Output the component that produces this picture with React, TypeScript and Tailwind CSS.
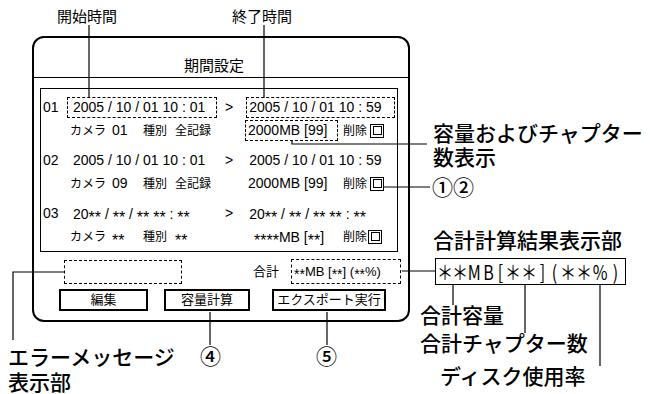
import React from "react";

const JP = "font-['Liberation_Sans','Noto_Sans_CJK_JP',sans-serif]";

function Stars({ n = 2, small }: { n?: number; small?: boolean }) {
  return (
    <span className={small ? "relative top-[3px] text-[14px]" : "relative top-[4px] text-[16px]"}>
      {"*".repeat(n)}
    </span>
  );
}

function CheckBox() {
  return (
    <div className="w-[14px] h-[14px] border-[1.5px] border-black p-[1.5px]">
      <div className="w-full h-full border border-black" />
    </div>
  );
}

function Row({
  no,
  start,
  end,
  cam,
  size,
  marked,
  last,
}: {
  no: string;
  start: React.ReactNode;
  end: React.ReactNode;
  cam: React.ReactNode;
  size: React.ReactNode;
  marked?: boolean;
  last?: boolean;
}) {
  const box = marked ? "border-dashed border-black" : "border-transparent";
  return (
    <div className="flex flex-col">
      <div className="flex items-center h-[23px] text-[14px]">
        <span className="w-[26px] pl-[2px]">{no}</span>
        <div className={`w-[150px] h-[21px] flex items-center pl-[5px] border whitespace-nowrap ${box}`}>{start}</div>
        <span className="ml-[8px]">&gt;</span>
        <div className={`ml-[13px] w-[149px] h-[21px] flex items-center pl-[2px] border whitespace-nowrap ${box}`}>{end}</div>
      </div>
      <div className="flex items-center h-[23px] pl-[29px] text-[14px]">
        <span className="w-[42px] text-[12px]">カメラ</span>
        <span className="w-[31px]">{cam}</span>
        <span className="w-[32px] text-[12px]">種別</span>
        <span className="w-[70px] text-[12px]">{last ? <Stars /> : "全記録"}</span>
        <div className={`w-[93px] h-[21px] flex items-center border whitespace-nowrap ${last ? "pl-[8px]" : "pl-[2px]"} ${box}`}>
          {size}
        </div>
        <span className="ml-[5px] text-[12px]">削除</span>
        <div className={last ? "ml-[1px]" : "ml-[3px]"}>
          <CheckBox />
        </div>
      </div>
    </div>
  );
}

const sumChars: [string, string][] = [
  ["＊", "w-[15px]"],
  ["＊", "w-[15px]"],
  ["M", "w-[15px]"],
  ["B", "w-[13px]"],
  ["[", "w-[10px]"],
  ["＊", "w-[16px]"],
  ["＊", "w-[16px]"],
  ["]", "w-[11px]"],
  ["(", "w-[12px]"],
  ["＊", "w-[16px]"],
  ["＊", "w-[16px]"],
  ["%", "w-[17px]"],
  [")", "w-[13px]"],
];

export default function App() {
  const stamp = (
    <span>
      20<Stars /> / <Stars /> / <Stars /> <Stars /> : <Stars />
    </span>
  );
  return (
    <div className={`relative w-[650px] h-[394px] bg-white text-black overflow-hidden ${JP}`}>
      <div className="pt-[36px] pl-[32px]">
        <div className="w-[378px] h-[286px] border-2 border-black rounded-[12px] flex flex-col">
          <div className="h-[40px] border-b-[1.5px] border-black pt-[19px] pr-[14px] text-center text-[15px] leading-[18px]">
            期間設定
          </div>

          <div className="mt-[10px] ml-[6px] w-[358px] border border-black pt-[7px] pb-[3px] flex flex-col gap-[7px]">
            <Row
              no="01"
              marked
              start="2005 / 10 / 01 10 : 01"
              end="2005 / 10 / 01 10 : 59"
              cam="01"
              size="2000MB [99]"
            />
            <Row
              no="02"
              start="2005 / 10 / 01 10 : 01"
              end="2005 / 10 / 01 10 : 59"
              cam="09"
              size="2000MB [99]"
            />
            <Row
              no="03"
              last
              start={stamp}
              end={stamp}
              cam={<Stars />}
              size={
                <span>
                  <Stars n={4} />MB [<Stars />]
                </span>
              }
            />
          </div>

          <div className="mt-[7px] flex items-center h-[25px]">
            <div className="ml-[30px] w-[118px] h-[24px] border border-dashed border-black" />
            <span className="ml-[71px] text-[13px]">合計</span>
            <div className="ml-[12px] w-[110px] h-[25px] border border-dashed border-black flex items-center pl-[2px] text-[13px] whitespace-nowrap">
              <span>
                <Stars small />MB [<Stars small />] (<Stars small />%)
              </span>
            </div>
          </div>

          <div className="mt-[5px] flex items-center text-[13px] whitespace-nowrap">
            <div className="ml-[25px] w-[89px] h-[22px] border-2 border-black flex items-center justify-center">編集</div>
            <div className="ml-[16px] w-[86px] h-[22px] border-2 border-black flex items-center justify-center">容量計算</div>
            <div className="ml-[22px] w-[114px] h-[22px] border-2 border-black flex items-center justify-center">
              エクスポート実行
            </div>
          </div>
        </div>
      </div>

      <svg className="absolute left-0 top-0 pointer-events-none" width="650" height="394" fill="none" stroke="black" strokeWidth="1.2">
        <path d="M89 25V98" />
        <path d="M264 25V98" />
        <path d="M292 140V144H427" />
        <path d="M384 187H430" />
        <path d="M402 271H435" />
        <path d="M64 272H13V340" />
        <path d="M210 312V345" />
        <path d="M327 312V345" />
        <path d="M453 285V305" />
        <path d="M525 285V333" />
        <path d="M600 285V366" />
      </svg>

      <div className="absolute left-[57px] top-[8px] text-[15px] leading-[18px]">開始時間</div>
      <div className="absolute left-[232px] top-[8px] text-[15px] leading-[18px]">終了時間</div>

      <div className="absolute left-[433px] top-[122px] text-[21px] leading-[24px] font-medium">
        容量およびチャプター
        <br />
        数表示
      </div>
      <div className="absolute left-[432px] top-[176px] text-[21px] leading-[24px] font-medium">①②</div>
      <div className="absolute left-[433px] top-[229px] text-[21px] leading-[24px] font-medium">合計計算結果表示部</div>
      <div className="absolute left-[435px] top-[258px] w-[191px] h-[27px] border border-black flex items-center pl-[1px] font-['Noto_Sans_CJK_JP',sans-serif] text-[20px]">
        {sumChars.map(([c, w], i) => (
          <span key={i} className={`${w} flex justify-center`}>
            <span className="inline-block scale-x-[0.8]">{c}</span>
          </span>
        ))}
      </div>
      <div className="absolute left-[420px] top-[304px] text-[21px] leading-[24px] font-medium">合計容量</div>
      <div className="absolute left-[420px] top-[332px] text-[21px] leading-[24px] font-medium">合計チャプター数</div>
      <div className="absolute left-[440px] top-[365px] text-[21px] leading-[24px] font-medium">ディスク使用率</div>

      <div className="absolute left-[8px] top-[345px] text-[21px] leading-[25px] font-medium">
        エラーメッセージ
        <br />
        表示部
      </div>
      <div className="absolute left-[200px] top-[345px] text-[21px] leading-[24px] font-medium">④</div>
      <div className="absolute left-[316px] top-[345px] text-[21px] leading-[24px] font-medium">⑤</div>
    </div>
  );
}
